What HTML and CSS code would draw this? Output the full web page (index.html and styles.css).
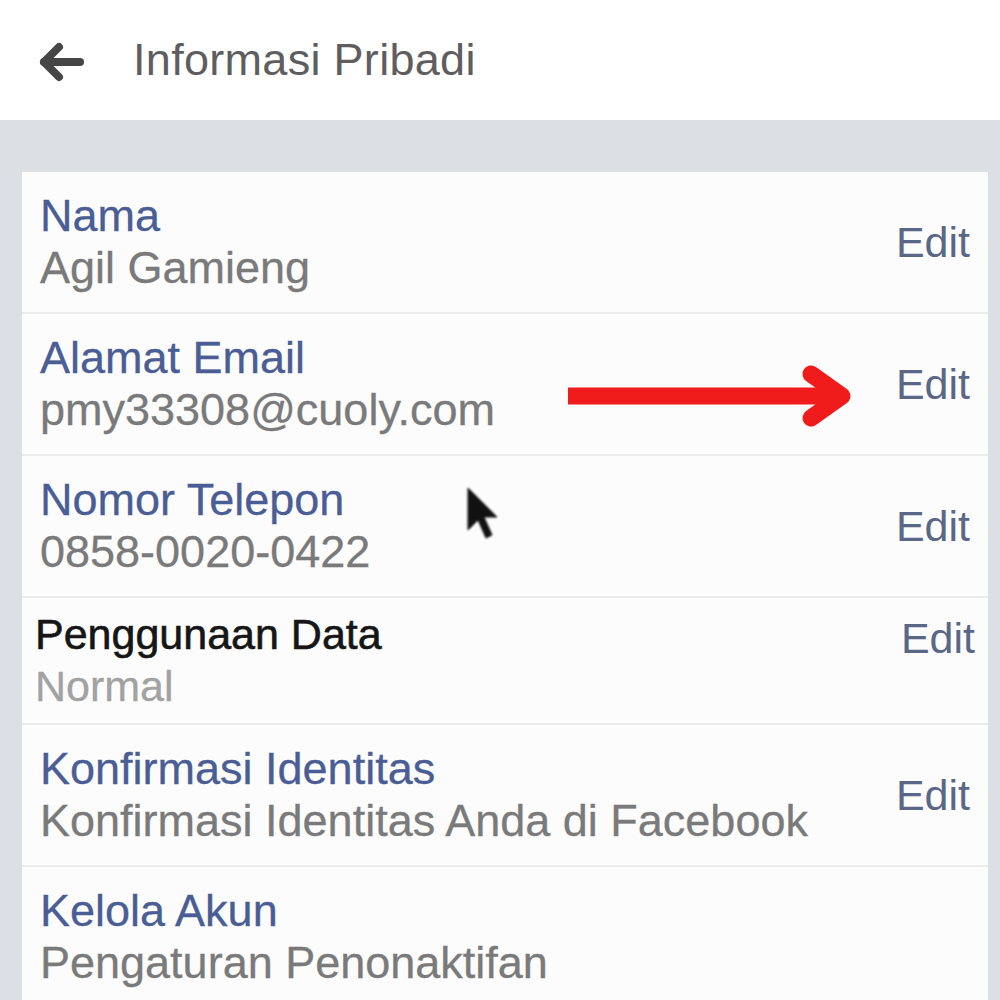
FILE: index.html
```html
<!doctype html>
<html>
<head>
<meta charset="utf-8" />
<title>Informasi Pribadi</title>
<link rel="stylesheet" href="styles.css">
</head>
<body>
	<div class="topbar">
		<svg class="back" width="48" height="40" viewBox="0 0 48 40">
			<path d="M8 20 H44" />
			<path d="M23 5 L8 20 L23 35" />
		</svg>
		<h1>Informasi Pribadi</h1>
	</div>
	<div class="page">
		<div class="card">
			<div class="row">
				<div class="info">
					<div class="label">Nama</div>
					<div class="value">Agil Gamieng</div>
				</div>
				<a class="edit" href="javascript:;">Edit</a>
			</div>
			<div class="row">
				<div class="info">
					<div class="label">Alamat Email</div>
					<div class="value">pmy33308@cuoly.com</div>
				</div>
				<a class="edit" href="javascript:;">Edit</a>
			</div>
			<div class="row">
				<div class="info">
					<div class="label">Nomor Telepon</div>
					<div class="value">0858-0020-0422</div>
				</div>
				<a class="edit" href="javascript:;">Edit</a>
			</div>
			<div class="row row-data">
				<div class="info">
					<div class="label">Penggunaan Data</div>
					<div class="value">Normal</div>
				</div>
				<a class="edit" href="javascript:;">Edit</a>
			</div>
			<div class="row">
				<div class="info">
					<div class="label">Konfirmasi Identitas</div>
					<div class="value">Konfirmasi Identitas Anda di Facebook</div>
				</div>
				<a class="edit" href="javascript:;">Edit</a>
			</div>
			<div class="row">
				<div class="info">
					<div class="label">Kelola Akun</div>
					<div class="value">Pengaturan Penonaktifan</div>
				</div>
			</div>
		</div>
	</div>

	<!-- annotation drawn over the screenshot -->
	<svg class="mark" width="300" height="80" viewBox="0 0 300 80">
		<path class="shaft" d="M8 38 H278" />
		<path class="head" d="M251 16 L282 38 L251 60" />
	</svg>
	<svg class="pointer" width="32" height="54" viewBox="0 0 32 54">
		<path d="M1 1 L1 43 L11 33 L19 51 L25 48 L17 30 L30 30 Z" />
	</svg>
</body>
</html>
```

FILE: styles.css
```css
html,body{margin:0; padding:0;}
body{width:1000px; height:1000px; overflow:hidden; position:relative; background:#dde1e7; font-family:"Liberation Sans", Arial, sans-serif;}

.topbar{height:120px; background:#fff; display:flex; align-items:center; padding-left:36px;}
.back{margin-top:4px;}
.back path{fill:none; stroke:#464646; stroke-width:8; stroke-linecap:round; stroke-linejoin:round;}
.topbar h1{margin:0 0 0 49px; font-size:45px; font-weight:normal; color:#5e5e5e; letter-spacing:0.3px;}

.page{padding:52px 12px 0 22px; background:#dcdfe3;}
.card{background:#fcfcfc; height:828px;}

.row{display:flex; align-items:center; justify-content:space-between; padding:18px 18px 18px 18px; border-bottom:2px solid #ebebeb;}
.row:last-child{border-bottom:none;}
.info{display:flex; flex-direction:column;}
.label{font-size:45px; line-height:52px; color:#4a5e95; -webkit-text-stroke:0.3px #4a5e95;}
.value{font-size:45px; line-height:52px; color:#7a7a7a; -webkit-text-stroke:0.3px #7a7a7a;}
.edit{font-size:43px; color:#5a6786; text-decoration:none;}

.row-data{align-items:flex-start; padding:10px 13px 11px 13px;}
.row-data .label{color:#161616; font-size:43px; -webkit-text-stroke:0.6px #161616;}
.row-data .value{color:#a2a2a2; font-size:43px; -webkit-text-stroke:0.3px #a2a2a2;}
.row-data .edit{margin-top:6px;}

.mark{position:absolute; left:560px; top:358px;}
.mark path{fill:none; stroke:#f01b1b; stroke-width:17;}
.mark .shaft{stroke-linecap:butt;}
.mark .head{stroke-linecap:round; stroke-linejoin:round;}

.pointer{position:absolute; left:467px; top:487px; filter:blur(1px);}
.pointer path{fill:#111; stroke:#111; stroke-width:1;}
```
